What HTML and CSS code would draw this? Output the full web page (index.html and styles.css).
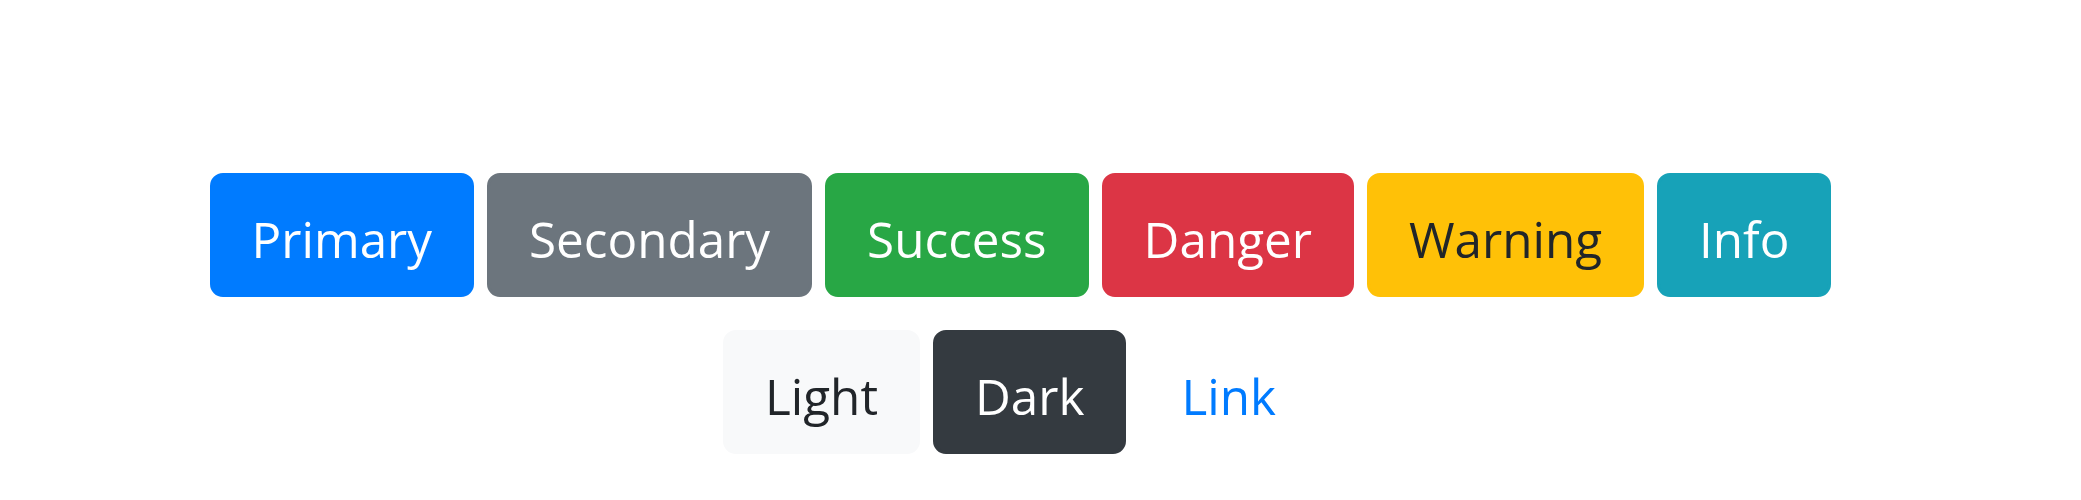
FILE: index.html
```html
<!DOCTYPE html>
<html lang="en">
<head>
<meta charset="utf-8">
<title>Buttons</title>
<link rel="stylesheet" href="styles.css">
</head>
<body>
<main class="stage">
  <div class="btn-row">
    <button type="button" class="btn btn-primary">Primary</button>
    <button type="button" class="btn btn-secondary">Secondary</button>
    <button type="button" class="btn btn-success">Success</button>
    <button type="button" class="btn btn-danger">Danger</button>
    <button type="button" class="btn btn-warning">Warning</button>
    <button type="button" class="btn btn-info">Info</button>
  </div>
  <div class="btn-row">
    <button type="button" class="btn btn-light">Light</button>
    <button type="button" class="btn btn-dark">Dark</button>
    <button type="button" class="btn btn-link">Link</button>
  </div>
</main>
</body>
</html>
```
FILE: styles.css
```css
html, body {
  margin: 0;
  padding: 0;
  background: #ffffff;
}

.stage {
  width: 2041px;
  padding-top: 173px;
  display: flex;
  flex-direction: column;
  align-items: center;
  gap: 33px;
  font-family: "Open Sans", "Noto Sans", "Liberation Sans", sans-serif;
}

.btn-row {
  display: flex;
  gap: 13px;
}

.btn {
  display: inline-block;
  margin: 0;
  font-family: inherit;
  font-size: 49.4px;
  font-weight: 400;
  line-height: 78px;
  padding: 24px 39px 16px;
  border: 3px solid transparent;
  border-radius: 13px;
  text-align: center;
  white-space: nowrap;
  cursor: pointer;
}

.btn-primary { color: #fff; background: #007bff; border-color: #007bff; }
.btn-secondary { color: #fff; background: #6c757d; border-color: #6c757d; }
.btn-success { color: #fff; background: #28a745; border-color: #28a745; }
.btn-danger { color: #fff; background: #dc3545; border-color: #dc3545; }
.btn-warning { color: #212529; background: #ffc107; border-color: #ffc107; }
.btn-info { color: #fff; background: #17a2b8; border-color: #17a2b8; }
.btn-light { color: #212529; background: #f8f9fa; border-color: #f8f9fa; }
.btn-dark { color: #fff; background: #343a40; border-color: #343a40; }
.btn-link { color: #007bff; background: transparent; border-color: transparent; }
```
